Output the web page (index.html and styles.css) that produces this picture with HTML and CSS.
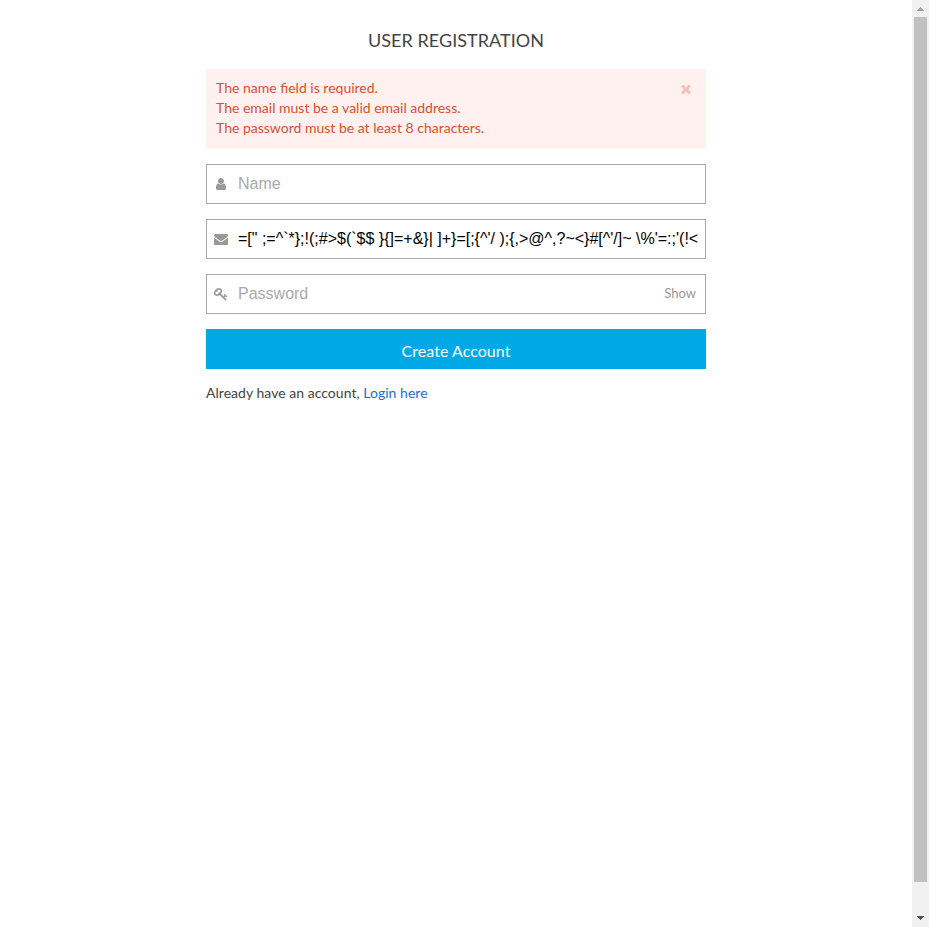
FILE: index.html
```html
<!DOCTYPE html>
<html lang="en">
<head>
<meta charset="utf-8">
<title>User Registration</title>
<link rel="stylesheet" href="styles.css">
</head>
<body>
<main class="page">
  <form class="register">
    <h1 class="title">USER REGISTRATION</h1>
    <div class="alert">
      <div class="messages">
        <p>The name field is required.</p>
        <p>The email must be a valid email address.</p>
        <p>The password must be at least 8 characters.</p>
      </div>
      <svg class="icon close" viewBox="-192 -1536 1792 1792"><path transform="scale(1 -1)" d="M1298 214q0 -40 -28 -68l-136 -136q-28 -28 -68 -28t-68 28l-294 294l-294 -294q-28 -28 -68 -28t-68 28l-136 136q-28 28 -28 68t28 68l294 294l-294 294q-28 28 -28 68t28 68l136 136q28 28 68 28t68 -28l294 -294l294 294q28 28 68 28t68 -28l136 -136q28 -28 28 -68t-28 -68l-294 -294l294 -294q28 -28 28 -68z"/></svg>
    </div>
    <label class="field">
      <svg class="icon" viewBox="-256 -1536 1792 1792"><path transform="scale(1 -1)" d="M1280 137q0 -109 -62.5 -187t-150.5 -78h-854q-88 0 -150.5 78t-62.5 187q0 85 8.5 160.5t31.5 152t58.5 131t94 89t134.5 34.5q131 -128 313 -128t313 128q76 0 134.5 -34.5t94 -89t58.5 -131t31.5 -152t8.5 -160.5zM1024 1024q0 -159 -112.5 -271.5t-271.5 -112.5t-271.5 112.5t-112.5 271.5t112.5 271.5t271.5 112.5t271.5 -112.5t112.5 -271.5z"/></svg>
      <input class="input" type="text" placeholder="Name">
    </label>
    <label class="field">
      <svg class="icon" viewBox="0 -1536 1792 1792"><path transform="scale(1 -1)" d="M1792 826v-794q0 -66 -47 -113t-113 -47h-1472q-66 0 -113 47t-47 113v794q44 -49 101 -87q362 -246 497 -345q57 -42 92.5 -65.5t94.5 -48t110 -24.5h1h1q51 0 110 24.5t94.5 48t92.5 65.5q170 123 498 345q57 39 100 87zM1792 1120q0 -79 -49 -151t-122 -123q-376 -261 -468 -325q-10 -7 -42.5 -30.5t-54 -38t-52 -32.5t-57.5 -27t-50 -9h-1h-1q-23 0 -50 9t-57.5 27t-52 32.5t-54 38t-42.5 30.5q-91 64 -262 182.5t-205 142.5q-62 42 -117 115.5t-55 136.5q0 78 41.5 130t118.5 52h1472q65 0 112.5 -47t47.5 -113z"/></svg>
      <input class="input" type="text" value="=[&quot; ;=^`*};!(;#&gt;$(`$$ }{]=+&amp;}| ]+}=[;{^'/ );{,&gt;@^,?~&lt;}#[^'/]~ \%'=:;'(!&lt;">
    </label>
    <label class="field">
      <svg class="icon" viewBox="0 -1536 1792 1792"><path transform="scale(1 -1)" d="M832 1024q0 80 -56 136t-136 56t-136 -56t-56 -136q0 -42 19 -83q-41 19 -83 19q-80 0 -136 -56t-56 -136t56 -136t136 -56t136 56t56 136q0 42 -19 83q41 -19 83 -19q80 0 136 56t56 136zM1683 320q0 -17 -49 -66t-66 -49q-9 0 -28.5 16t-36.5 33t-38.5 40t-24.5 26l-96 -96l220 -220q28 -28 28 -68q0 -42 -39 -81t-81 -39q-40 0 -68 28l-671 671q-176 -131 -365 -131q-163 0 -265.5 102.5t-102.5 265.5q0 160 95 313t248 248t313 95q163 0 265.5 -102.5t102.5 -265.5q0 -189 -131 -365l355 -355l96 96q-3 3 -26 24.5t-40 38.5t-33 36.5t-16 28.5q0 17 49 66t66 49q13 0 23 -10q6 -6 46 -44.5t82 -79.5t86.5 -86t73 -78t28.5 -41z"/></svg>
      <input class="input" type="password" placeholder="Password">
      <span class="show">Show</span>
    </label>
    <button class="submit" type="button">Create Account</button>
    <p class="login">Already have an account, <a class="link" href="#">Login here</a></p>
  </form>
</main>
<div class="scrollbar">
  <svg class="arrow" viewBox="0 0 17 17" shape-rendering="crispEdges"><path fill="#a3a3a3" d="M8 7h1v1h1v1h1v1h1v1H5v-1h1V9h1V8h1z"/></svg>
  <div class="thumb"></div>
  <svg class="arrow" viewBox="0 0 17 17" shape-rendering="crispEdges"><path fill="#505050" d="M5 6h7v1h-1v1h-1v1H9v1H8V9H7V8H6V7H5z"/></svg>
</div>
</body>
</html>
```
FILE: styles.css
```css
* { box-sizing: border-box; }

body {
  margin: 0;
  height: 100vh;
  display: flex;
  overflow: hidden;
  background: #fff;
  color: #444;
  font: 14px/20px Lato, sans-serif;
}

p { margin: 0; }

.page { flex: 1; }

.register {
  width: 500px;
  margin: 0 auto;
  padding-top: 27px;
}

.title {
  margin: 0 0 16px;
  font-size: 18px;
  font-weight: 400;
  line-height: 26px;
  letter-spacing: 0.05px;
  text-align: center;
}

.alert {
  display: flex;
  justify-content: space-between;
  height: 80px;
  padding: 9px 13px 11px 10px;
  margin-bottom: 15px;
  background: #fff1f0;
  color: #d85030;
}

.icon {
  flex: none;
  width: 14px;
  height: 14px;
  fill: #999;
}

.close {
  margin-top: 4px;
  fill: #f3c1b6;
}

.field {
  display: flex;
  height: 40px;
  padding: 0 7px;
  margin-bottom: 15px;
  border: 1px solid #a9a9a9;
}

.field .icon { margin-top: 12px; }

.input {
  flex: 1;
  min-width: 0;
  height: 38px;
  margin-left: 10px;
  padding: 0;
  border: 0;
  outline: 0;
  background: transparent;
  color: #000;
  font: 16px "Liberation Sans", sans-serif;
}

.input::placeholder { color: #a9a9a9; }

.show {
  padding: 8px 2px 0 0;
  color: #999;
  font-size: 13px;
}

.submit {
  display: block;
  width: 100%;
  height: 40px;
  margin-bottom: 14px;
  padding: 3px 0 0;
  border: 0;
  background: #00a8e6;
  color: #fff;
  font: 16px Lato, sans-serif;
  letter-spacing: 0.05px;
}

.login { letter-spacing: 0.03px; }

.link {
  color: #1a70d8;
  text-decoration: none;
}

.scrollbar {
  flex: none;
  width: 17px;
  display: flex;
  flex-direction: column;
  background: #f1f1f1;
}

.arrow {
  display: block;
  width: 17px;
  height: 17px;
}

.thumb {
  flex: 1;
  margin: 0 2px 28px;
  background: #c1c1c1;
}
```
